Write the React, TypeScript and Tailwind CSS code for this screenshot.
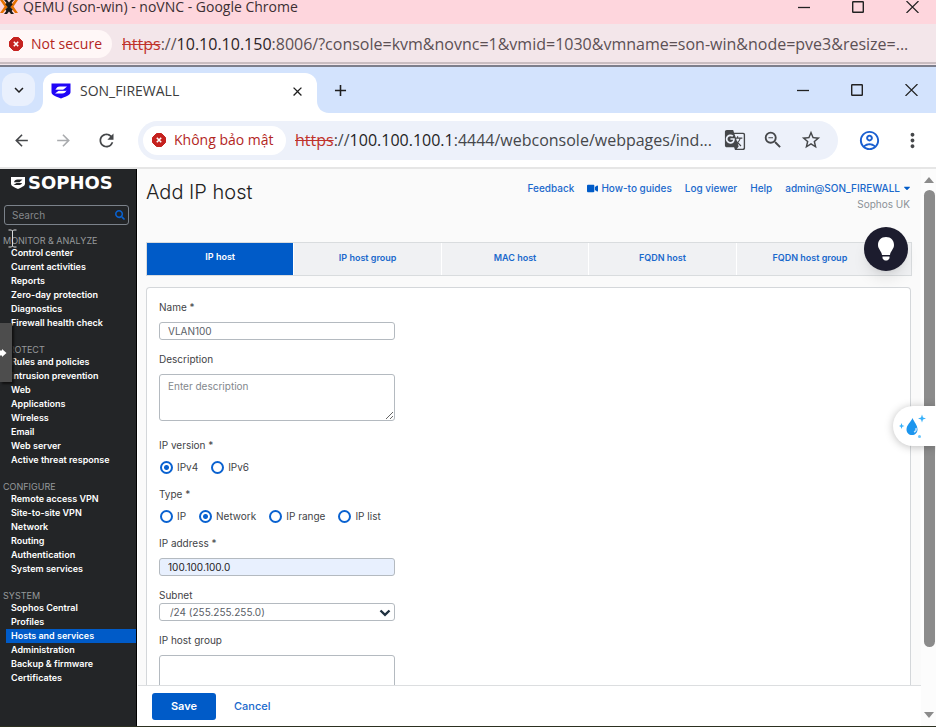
import type { ReactNode } from "react"
import {
  MdAdd,
  MdArrowBack,
  MdArrowForward,
  MdClose,
  MdExpandMore,
  MdGTranslate,
  MdMoreVert,
  MdOutlineAccountCircle,
  MdOutlineZoomOut,
  MdRefresh,
  MdStarBorder,
} from "react-icons/md"
import { FaCaretDown, FaSearch, FaVideo } from "react-icons/fa"

const menu = [
  {
    title: "MONITOR & ANALYZE",
    items: [
      "Control center",
      "Current activities",
      "Reports",
      "Zero-day protection",
      "Diagnostics",
      "Firewall health check",
    ],
  },
  {
    title: "PROTECT",
    items: [
      "Rules and policies",
      "Intrusion prevention",
      "Web",
      "Applications",
      "Wireless",
      "Email",
      "Web server",
      "Active threat response",
    ],
  },
  {
    title: "CONFIGURE",
    items: [
      "Remote access VPN",
      "Site-to-site VPN",
      "Network",
      "Routing",
      "Authentication",
      "System services",
    ],
  },
  {
    title: "SYSTEM",
    items: [
      "Sophos Central",
      "Profiles",
      "Hosts and services",
      "Administration",
      "Backup & firmware",
      "Certificates",
    ],
  },
]

const tabs = ["IP host", "IP host group", "MAC host", "FQDN host", "FQDN host group"]

export default function App() {
  return (
    <div className="relative flex h-screen flex-col overflow-hidden border-b border-[#2c3020] bg-white font-['Open_Sans','Noto_Sans',sans-serif]">
      <OuterWindow />
      <TabStrip />
      <Toolbar />
      <div className="flex min-h-0 flex-1 font-['Inter',sans-serif]">
        <Sidebar />
        <Main />
        <Scrollbar />
      </div>
      <VncHandle />
    </div>
  )
}

function OuterWindow() {
  return (
    <header className="shrink-0">
      <div className="flex h-6 items-start justify-between bg-[#fed6dd] text-[#3b2f33]">
        <div className="flex h-[14px] items-center gap-[5px]">
          <ProxmoxIcon />
          <h1 className="text-sm leading-[14px] whitespace-nowrap">QEMU (son-win) - noVNC - Google Chrome</h1>
        </div>
        <div className="flex h-[14px] items-center pr-[17px]">
          <WindowButtons />
        </div>
      </div>
      <div className="flex h-[38px] items-center gap-[10px] bg-[#f3e6ea] pt-[2px]">
        <button className="flex h-7 w-28 shrink-0 items-center gap-2 rounded-r-full rounded-l-2xl bg-[#fff7f7] pl-[9px] text-sm font-medium whitespace-nowrap text-[#b3261e]">
          <DangerIcon />
          Not secure
        </button>
        <div className="min-w-0 flex-1 overflow-hidden text-base whitespace-nowrap text-[#5c5054]">
          <span className="text-[#c0322b] line-through">https</span>://
          <span className="text-[#2b2326]">10.10.10.150</span>
          :8006/?console=kvm&amp;novnc=1&amp;vmid=1030&amp;vmname=son-win&amp;node=pve3&amp;resize=...
        </div>
      </div>
      <div className="h-[5px] border-t-2 border-b-2 border-t-[#c9bdc1] border-b-[#7d7f8c] bg-[#f3e6ea]" />
    </header>
  )
}

function TabStrip() {
  return (
    <div className="flex h-[46px] shrink-0 items-end justify-between bg-[#d3e3fd] text-[#1f1f1f]">
      <div className="flex items-end">
        <button aria-label="Search tabs" className="mb-[7px] ml-[2px] flex size-[33px] items-center justify-center rounded-xl bg-[#e9f0fd]">
          <MdExpandMore size={18} />
        </button>
        <div className="relative ml-2 flex h-10 w-[274px] items-center rounded-t-xl bg-white pb-1 pl-2">
          <svg className="absolute bottom-0 -left-3" width="12" height="12" viewBox="0 0 12 12">
            <path d="M12 0V12H0C7 12 12 7 12 0Z" fill="#fff" />
          </svg>
          <svg className="absolute -right-3 bottom-0" width="12" height="12" viewBox="0 0 12 12">
            <path d="M0 0V12H12C5 12 0 7 0 0Z" fill="#fff" />
          </svg>
          <svg width="20" height="16" viewBox="0 0 20 16">
            <path d="M0.500 0.500H19.500V9C19.500 12 17 12.500 10 15.500C3 12.500 0.500 12 0.500 9Z" fill="#2006f7" />
            <path d="M16 3.500H9C6.500 3.500 5.500 4.500 4.500 7H12L16 3.500Z" fill="#fff" />
            <path d="M4 10.500H11C13.500 10.500 14.500 9.500 15.500 7.500H8L4 10.500Z" fill="#fff" />
            <path d="M5 7.200H15" stroke="#2006f7" />
          </svg>
          <span className="flex-1 pl-[9px] text-sm text-[#3c3c3c]">SON_FIREWALL</span>
          <button aria-label="Close tab" className="mr-3">
            <MdClose size={15} />
          </button>
        </div>
        <button aria-label="New tab" className="mb-[13px] ml-[14px]">
          <MdAdd size={19} />
        </button>
      </div>
      <div className="flex h-[46px] items-center pr-[18px]">
        <WindowButtons />
      </div>
    </div>
  )
}

function Toolbar() {
  return (
    <div className="flex h-[56px] shrink-0 items-center border-b-2 border-[#e6e6e6] bg-white text-[#45474a]">
      <div className="flex w-[138px] shrink-0 items-center gap-[23px] pl-3">
        <button aria-label="Back">
          <MdArrowBack size={19} />
        </button>
        <button aria-label="Forward" className="text-[#a9abae]">
          <MdArrowForward size={19} />
        </button>
        <button aria-label="Reload">
          <MdRefresh size={21} />
        </button>
      </div>
      <div className="flex h-[39px] min-w-0 flex-1 items-center rounded-full bg-[#edf1fa] pr-4 pl-[5px]">
        <button className="flex h-[29px] w-[143px] shrink-0 items-center gap-2 rounded-full bg-white pl-[9px] text-sm font-medium whitespace-nowrap text-[#b3261e]">
          <DangerIcon />
          Không bảo mật
        </button>
        <div className="min-w-0 flex-1 overflow-hidden pl-[9px] text-base whitespace-nowrap">
          <span className="text-[#c0322b] line-through">https</span>://
          <span className="text-[#1f1f1f]">100.100.100.1</span>
          :4444/webconsole/webpages/ind...
        </div>
        <div className="flex shrink-0 items-center gap-4">
          <button aria-label="Translate">
            <MdGTranslate size={22} />
          </button>
          <button aria-label="Zoom">
            <MdOutlineZoomOut size={22} />
          </button>
          <button aria-label="Bookmark">
            <MdStarBorder size={22} />
          </button>
        </div>
      </div>
      <div className="flex shrink-0 items-center gap-5 pr-3 pl-5">
        <button aria-label="Profile" className="text-[#1a5fd0]">
          <MdOutlineAccountCircle size={23} />
        </button>
        <button aria-label="Menu">
          <MdMoreVert size={23} />
        </button>
      </div>
    </div>
  )
}

function Sidebar() {
  return (
    <aside className="w-[137px] shrink-0 border-r border-black bg-[#232527]">
      <div className="flex h-[28px] items-center gap-[3px] pl-[11px] text-white">
        <svg width="14" height="12" viewBox="0 0 14 12">
          <path d="M0 0H14V6.500C14 9 12 9.500 7 12C2 9.500 0 9 0 6.500Z" fill="#fff" />
          <path d="M11.500 2.500H6.500C4.500 2.500 3.500 3.500 3 5.300H8.500ZM2.500 8H7.500C9.500 8 10.500 7.500 11 6H5.500Z" fill="#232527" />
        </svg>
        <span className="font-['DejaVu_Sans',sans-serif] text-lg leading-none font-bold">SOPHOS</span>
      </div>
      <div className="mx-1 mt-2 flex h-5 w-[125px] items-center rounded-[3px] border border-[#7b828a] pr-[3px] pl-[7px]">
        <input
          aria-label="Search"
          placeholder="Search"
          className="min-w-0 flex-1 bg-transparent text-[10px] text-white outline-none placeholder:text-[#85888b]"
        />
        <FaSearch size={10} className="text-[#0a62d0]" />
      </div>
      <nav className="mt-[10px] flex flex-col gap-[14px]">
        {menu.map((section) => (
          <div key={section.title}>
            <h2 className="h-[11px] pl-[3px] text-[9px] leading-3 whitespace-nowrap text-[#96999b]">{section.title}</h2>
            <ul>
              {section.items.map((item) => (
                <li key={item} className="pl-[6px]">
                  <a
                    href="#"
                    className={
                      item === "Hosts and services"
                        ? "block bg-[#005bc8] pl-[5px] text-[9px] leading-[14px] font-semibold whitespace-nowrap text-white"
                        : "block pl-[5px] text-[9px] leading-[14px] font-semibold whitespace-nowrap text-white"
                    }
                  >
                    {item}
                  </a>
                </li>
              ))}
            </ul>
          </div>
        ))}
      </nav>
    </aside>
  )
}

function Main() {
  return (
    <main className="relative flex min-w-0 flex-1 flex-col border-l border-white bg-[#fafafa]">
      <div className="flex min-h-0 flex-1 flex-col overflow-hidden pr-[9px] pl-2">
        <div className="flex h-[73px] shrink-0 items-start justify-between">
          <h2 className="pt-[9px] text-xl leading-7 font-light text-[#222]">Add IP host</h2>
          <div className="flex flex-col items-end pt-[11px] text-[10px] leading-4 whitespace-nowrap">
            <nav className="flex items-center gap-[13px] font-medium text-[#1a69cc]">
              <a href="#">Feedback</a>
              <a href="#" className="flex items-center gap-[3px]">
                <FaVideo size={11} className="text-[#005bc8]" />
                How-to guides
              </a>
              <a href="#">Log viewer</a>
              <a href="#">Help</a>
              <button className="flex items-center gap-[2px]">
                admin@SON_FIREWALL
                <FaCaretDown size={10} className="text-[#005bc8]" />
              </button>
            </nav>
            <span className="pr-[2px] text-[#8b9197]">Sophos UK</span>
          </div>
        </div>
        <nav className="flex h-[34px] shrink-0 border border-[#d9dcde] bg-[#f0f1f3] pr-7 text-[9px] leading-3">
          {tabs.map((tab, i) => (
            <a
              key={tab}
              href="#"
              className={
                i === 0
                  ? "flex flex-1 items-center justify-center bg-[#005bc8] pb-1 font-semibold text-white"
                  : "flex flex-1 items-center justify-center border-l border-white pb-[2px] font-semibold text-[#1a69cc]"
              }
            >
              {tab}
            </a>
          ))}
        </nav>
        <HostForm />
      </div>
      <div className="flex h-[41px] shrink-0 items-center gap-[18px] border-t border-[#dcdee0] bg-white pl-[14px] text-[11px]">
        <button className="h-[27px] w-16 rounded-[3px] bg-[#005bc8] font-semibold text-white">Save</button>
        <a href="#" className="font-medium text-[#1a69cc]">
          Cancel
        </a>
      </div>
      <button
        aria-label="Tips"
        className="absolute top-[58px] right-[13px] flex size-11 items-center justify-center rounded-full bg-[#1c1c2e] shadow-lg"
      >
        <svg width="18" height="26" viewBox="0 0 18 26" fill="#fff">
          <path d="M9 1C4 1 1 4.500 1 9C1 13 4.500 15 5 19H13C13.500 15 17 13 17 9C17 4.500 14 1 9 1Z" />
          <path d="M5.500 20.500H12.500V22C12.500 23 11.500 23 11.500 23.500C11 24.800 7 24.800 6.500 23.500C6.500 23 5.500 23 5.500 22Z" />
        </svg>
      </button>
    </main>
  )
}

function Field({ id, label, tight, children }: { id: string; label: string; tight?: boolean; children: ReactNode }) {
  return (
    <div className={tight ? "flex flex-col" : "flex flex-col gap-[7px]"}>
      <label htmlFor={id} className="leading-4">
        {label}
      </label>
      {children}
    </div>
  )
}

function RadioGroup({ name, label, options, selected }: { name: string; label: string; options: string[]; selected: string }) {
  return (
    <fieldset>
      <legend className="mb-[6px] leading-4">{label}</legend>
      <div className="flex h-4 items-center gap-[13px] pl-px">
        {options.map((option) => (
          <label key={option} className="flex items-center gap-1 whitespace-nowrap">
            <input
              type="radio"
              name={name}
              defaultChecked={option === selected}
              className="size-[13px] appearance-none rounded-full border-2 border-[#0a62d0] bg-white checked:bg-[radial-gradient(circle,#0a62d0_2px,#fff_3px)]"
            />
            {option}
          </label>
        ))}
      </div>
    </fieldset>
  )
}

function HostForm() {
  return (
    <form className="mt-[11px] mr-px flex-1 rounded-t-[4px] border border-b-0 border-[#d4d7da] bg-white">
      <div className="flex w-[260px] flex-col gap-[11px] px-3 pt-[11px] text-[10px] text-[#3f4347]">
        <Field id="name" label="Name *">
          <input
            id="name"
            defaultValue="VLAN100"
            className="h-[18px] rounded-[3px] border border-[#b4bac0] px-2 text-[#5a6066] outline-none"
          />
        </Field>
        <Field id="description" label="Description">
          <textarea
            id="description"
            placeholder="Enter description"
            className="mb-[5px] h-[47px] rounded-[3px] border border-[#b4bac0] px-2 py-[3px] leading-4 outline-none placeholder:text-[#82878c]"
          />
        </Field>
        <RadioGroup name="version" label="IP version *" options={["IPv4", "IPv6"]} selected="IPv4" />
        <RadioGroup name="type" label="Type *" options={["IP", "Network", "IP range", "IP list"]} selected="Network" />
        <Field id="address" label="IP address *">
          <input
            id="address"
            defaultValue="100.100.100.0"
            className="h-[18px] rounded-[3px] border border-[#b4bac0] bg-[#e8f0fe] px-2 text-[#1f2225] outline-none"
          />
        </Field>
        <Field id="subnet" label="Subnet" tight>
          <div className="relative flex">
            <select
              id="subnet"
              className="h-[18px] w-full appearance-none rounded-[3px] border border-[#b4bac0] bg-white px-[10px] text-[#5a6066] outline-none"
            >
              <option>/24 (255.255.255.0)</option>
            </select>
            <svg className="pointer-events-none absolute top-[6px] right-1" width="12" height="8" viewBox="0 0 12 8" fill="none">
              <path d="M1.500 1.500L6 5.800L10.500 1.500" stroke="#1f3140" strokeWidth="2.400" />
            </svg>
          </div>
        </Field>
        <Field id="group" label="IP host group">
          <input id="group" className="h-[60px] rounded-[3px] border border-[#b4bac0] px-2 outline-none" />
        </Field>
      </div>
    </form>
  )
}

function Scrollbar() {
  return (
    <div className="relative flex w-[15px] shrink-0 flex-col items-center bg-[#fcfcfc] py-2 pl-px">
      <svg width="10" height="6" viewBox="0 0 10 6">
        <path d="M0 6L5 0L10 6Z" fill="#8b8b8b" />
      </svg>
      <div className="mt-[7px] w-[11px] grow-[7] basis-0 rounded-full bg-[#8b8b8b]" />
      <div className="grow basis-0" />
      <svg width="10" height="6" viewBox="0 0 10 6">
        <path d="M0 0L5 6L10 0Z" fill="#8b8b8b" />
      </svg>
      <button
        aria-label="Assistant"
        className="absolute top-[237px] right-0 flex h-10 w-[43px] items-center rounded-l-full bg-white pl-[6px] shadow-[0_1px_8px_rgba(0,0,0,0.25)]"
      >
        <svg width="27" height="26" viewBox="0 0 27 26">
          <path d="M13.500 5C12 9 7.500 12 7.500 16.500C7.500 20 10 22 13 22C16 22 18.500 20 18.500 16.500C18.500 12 15 9 13.500 5Z" fill="#1b95ee" />
          <path d="M17 15C17.500 17 16.500 18.500 15 19" stroke="#bfe3ff" strokeWidth="1.500" fill="none" />
          <path d="M23 1.500L24 4.500L27 5.500L24 6.500L23 9.500L22 6.500L19 5.500L22 4.500Z" fill="#37b0fa" />
          <path d="M2.500 10L3.300 12.200L5.500 13L3.300 13.800L2.500 16L1.700 13.800L0 13L1.700 12.200Z" fill="#37b0fa" />
          <circle cx="20.500" cy="23.500" r="1.500" fill="#6cc6fb" />
        </svg>
      </button>
    </div>
  )
}

// noVNC side handle and the remote mouse pointer
function VncHandle() {
  return (
    <>
      <button
        aria-label="Show control bar"
        className="absolute top-[323px] left-0 flex h-[59px] w-3 items-center bg-[#4d4d4d] shadow-[2px_2px_2px_#111]"
      >
        <svg width="7" height="8" viewBox="0 0 7 8">
          <path d="M0 1.500H2V0L6.500 4L2 8V6.500H0Z" fill="#fff" />
        </svg>
      </button>
      <svg className="absolute top-[229px] left-2" width="9" height="19" viewBox="0 0 9 19" fill="none">
        <path d="M0.500 1H3.500L4.500 2L5.500 1H8.500M4.500 2V17M0.500 18H3.500L4.500 17L5.500 18H8.500" stroke="#dadada" />
      </svg>
    </>
  )
}

function WindowButtons() {
  return (
    <div className="flex gap-[42px] text-[#222]">
      <button aria-label="Minimize">
        <svg width="12" height="12" viewBox="0 0 12 12" stroke="currentColor" strokeWidth="1.300">
          <path d="M0 6.500H12" />
        </svg>
      </button>
      <button aria-label="Maximize">
        <svg width="12" height="12" viewBox="0 0 12 12" fill="none" stroke="currentColor" strokeWidth="1.400">
          <rect x="0.700" y="0.700" width="10.600" height="10.600" rx="0.500" />
        </svg>
      </button>
      <button aria-label="Close">
        <svg width="13" height="12" viewBox="0 0 13 12" stroke="currentColor" strokeWidth="1.200">
          <path d="M0.500 0L12.500 12M12.500 0L0.500 12" />
        </svg>
      </button>
    </div>
  )
}

function DangerIcon() {
  return (
    <svg width="14" height="14" viewBox="0 0 14 14" className="shrink-0">
      <path d="M4.500 0.500H9.500L13.500 4.500V9.500L9.500 13.500H4.500L0.500 9.500V4.500Z" fill="#c5221f" stroke="#c5221f" strokeLinejoin="round" />
      <path d="M4.800 4.800L9.200 9.200M9.200 4.800L4.800 9.200" stroke="#fff" strokeWidth="1.600" />
    </svg>
  )
}

function ProxmoxIcon() {
  return (
    <svg width="18" height="14" viewBox="0 0 18 14" fill="none">
      <path d="M0 0H3L8 6.500L3 13H0L4.500 6.500ZM18 0H15L10 6.500L15 13H18L13.500 6.500Z" fill="#e57000" />
      <path d="M4 0H7L9 2.500L11 0H14L9 6ZM4 14L9 7.500L14 14H11L9 11.500L7 14Z" fill="#1a1a1a" />
      <path d="M6 3.500L12 10.500M12 3.500L6 10.500" stroke="#1a1a1a" strokeWidth="2" />
    </svg>
  )
}
